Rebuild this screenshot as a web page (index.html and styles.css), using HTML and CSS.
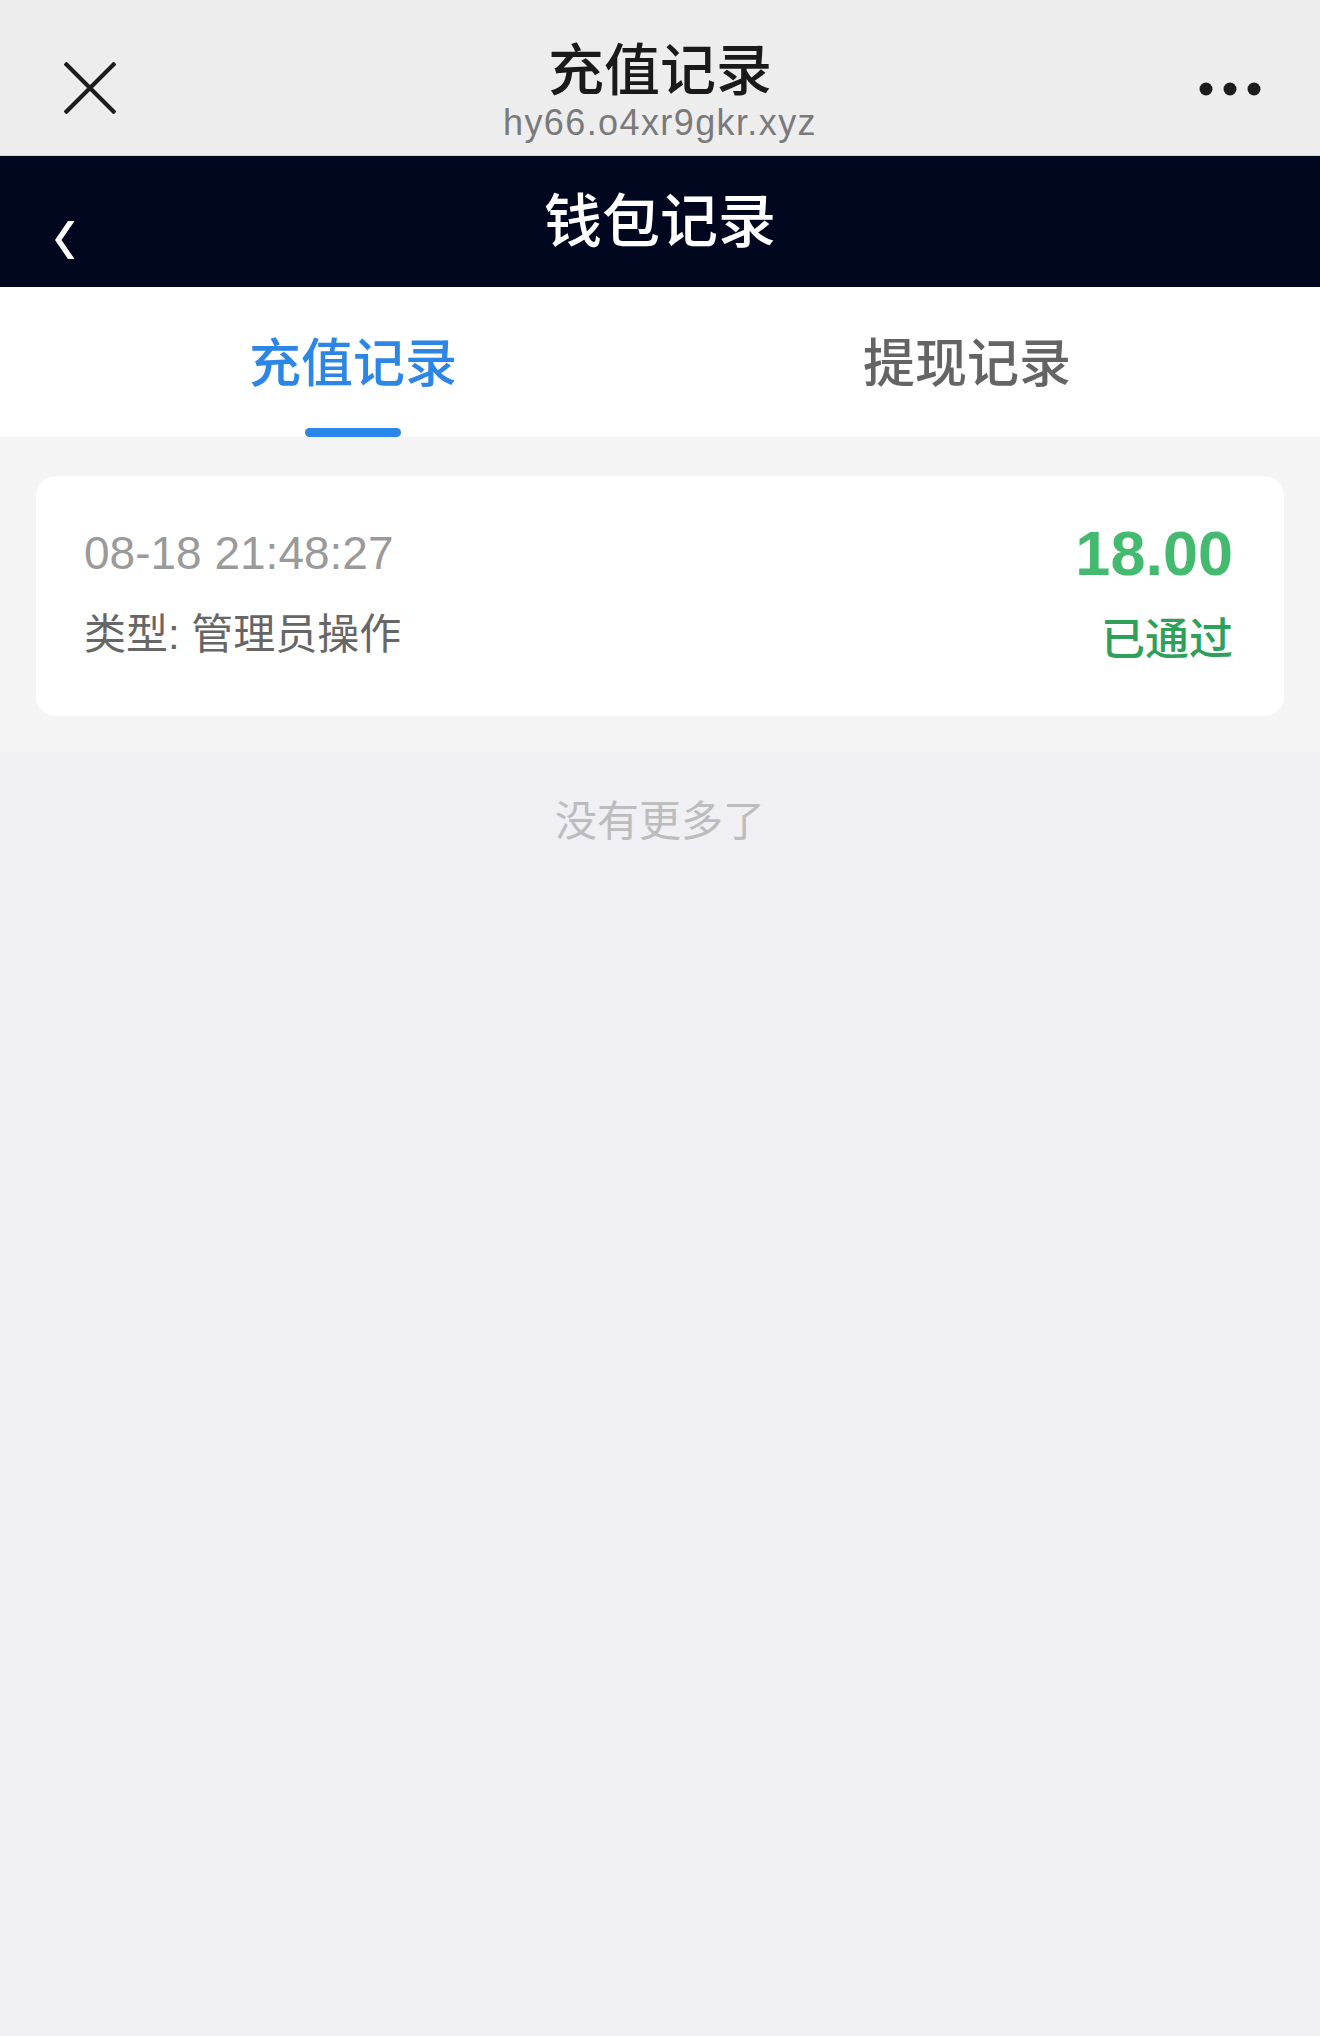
FILE: index.html
```html
<!DOCTYPE html>
<html lang="zh-CN">
<head>
<meta charset="utf-8">
<title>充值记录</title>
<link rel="stylesheet" href="styles.css">
</head>
<body>
<header class="topbar">
  <div class="topbar-left">
    <svg class="close-icon" width="52" height="52" viewBox="0 0 52 52">
      <path d="M1 1 L51 51 M51 1 L1 51" stroke="#1c1c1c" stroke-width="4.2" fill="none"/>
    </svg>
  </div>
  <div class="topbar-center">
    <div class="topbar-title">充值记录</div>
    <div class="topbar-url">hy66.o4xr9gkr.xyz</div>
  </div>
  <div class="topbar-right">
    <svg class="more-icon" width="62" height="14" viewBox="0 0 62 14">
      <circle cx="7" cy="7" r="6.5" fill="#1c1c1c"/>
      <circle cx="31" cy="7" r="6.5" fill="#1c1c1c"/>
      <circle cx="55" cy="7" r="6.5" fill="#1c1c1c"/>
    </svg>
  </div>
</header>

<nav class="navbar">
  <div class="navbar-left">
    <svg class="back-icon" width="20" height="40" viewBox="0 0 20 40">
      <polygon points="13,1 19.5,1 6.5,20 19.5,39 13,39 0,20" fill="#ffffff"/>
    </svg>
  </div>
  <div class="navbar-title">钱包记录</div>
  <div></div>
</nav>

<div class="tabs">
  <div class="tab tab-active">
    <span class="tab-label">充值记录</span>
    <span class="tab-line"></span>
  </div>
  <div class="tab">
    <span class="tab-label">提现记录</span>
    <span class="tab-line tab-line-hidden"></span>
  </div>
</div>

<section class="list">
  <div class="card">
    <div class="card-left">
      <div class="card-date">08-18 21:48:27</div>
      <div class="card-type">类型: 管理员操作</div>
    </div>
    <div class="card-right">
      <div class="card-amount">18.00</div>
      <div class="card-status">已通过</div>
    </div>
  </div>
</section>

<div class="nomore">没有更多了</div>
</body>
</html>
```

FILE: styles.css
```css
html, body {
  margin: 0;
  padding: 0;
  background: #efeff4;
}

body {
  width: 1320px;
  min-height: 2036px;
  font-family: "Liberation Sans", "Noto Sans CJK SC", sans-serif;
}

.topbar {
  display: grid;
  grid-template-columns: 1fr auto 1fr;
  align-items: center;
  background: #ededed;
  padding: 34px 0 12px;
  border-bottom: 1px solid #d6d6d6;
}

.topbar-left {
  padding-left: 64px;
  display: flex;
  align-items: center;
  margin-top: -1px;
}

.close-icon {
  display: block;
}

.topbar-center {
  text-align: center;
}

.topbar-title {
  font-family: "Noto Sans CJK SC", sans-serif;
  font-size: 56px;
  line-height: 64px;
  font-weight: 500;
  color: #1a1a1a;
}

.topbar-url {
  margin-top: 5px;
  font-size: 36px;
  line-height: 40px;
  letter-spacing: 1.4px;
  color: #7a7a7a;
}

.topbar-right {
  display: flex;
  justify-content: flex-end;
  padding-right: 59px;
  margin-top: 0;
}

.more-icon {
  display: block;
}

.navbar {
  display: grid;
  grid-template-columns: 1fr auto 1fr;
  align-items: center;
  height: 131px;
  background: #020720;
}

.navbar-left {
  padding-left: 55px;
  display: flex;
  align-items: center;
  margin-top: 36px;
}

.back-icon {
  display: block;
}

.navbar-title {
  margin-top: -8px;
  font-family: "Noto Sans CJK SC", sans-serif;
  font-size: 58px;
  line-height: 123px;
  font-weight: 500;
  color: #ffffff;
}

.tabs {
  display: flex;
  background: #ffffff;
  padding: 33px 46px 0;
  height: 117px;
}

.tab {
  flex: 1;
  display: flex;
  flex-direction: column;
  align-items: center;
}

.tab-label {
  font-family: "Noto Sans CJK SC", sans-serif;
  font-size: 52px;
  line-height: 80px;
  font-weight: 500;
  color: #646464;
}

.tab-active .tab-label {
  color: #2b86e6;
}

.tab-line {
  margin-top: 28px;
  width: 96px;
  height: 9px;
  border-radius: 5px;
  background: #2a87ea;
}

.tab-line-hidden {
  visibility: hidden;
}

.list {
  background: #f4f4f4;
  padding: 39px 36px 36px;
}

.card {
  display: flex;
  justify-content: space-between;
  background: #ffffff;
  border-radius: 20px;
  padding: 45px 51px 48px 48px;
  height: 147px;
}

.card-left,
.card-right {
  display: flex;
  flex-direction: column;
}

.card-right {
  align-items: flex-end;
}

.card-date {
  font-size: 46px;
  line-height: 64px;
  color: #9a9a9a;
}

.card-type {
  margin-top: 18px;
  font-size: 42px;
  line-height: 64px;
  color: #666666;
}

.card-amount {
  font-size: 63px;
  line-height: 64px;
  font-weight: 700;
  color: #43ba6f;
}

.card-status {
  margin-top: 19px;
  font-family: "Noto Sans CJK SC", sans-serif;
  font-size: 44px;
  line-height: 64px;
  font-weight: 500;
  color: #2fa05a;
}

.nomore {
  padding-top: 36px;
  text-align: center;
  font-family: "Noto Sans CJK SC", sans-serif;
  font-size: 42px;
  line-height: 60px;
  color: #bcbcbc;
}
```
